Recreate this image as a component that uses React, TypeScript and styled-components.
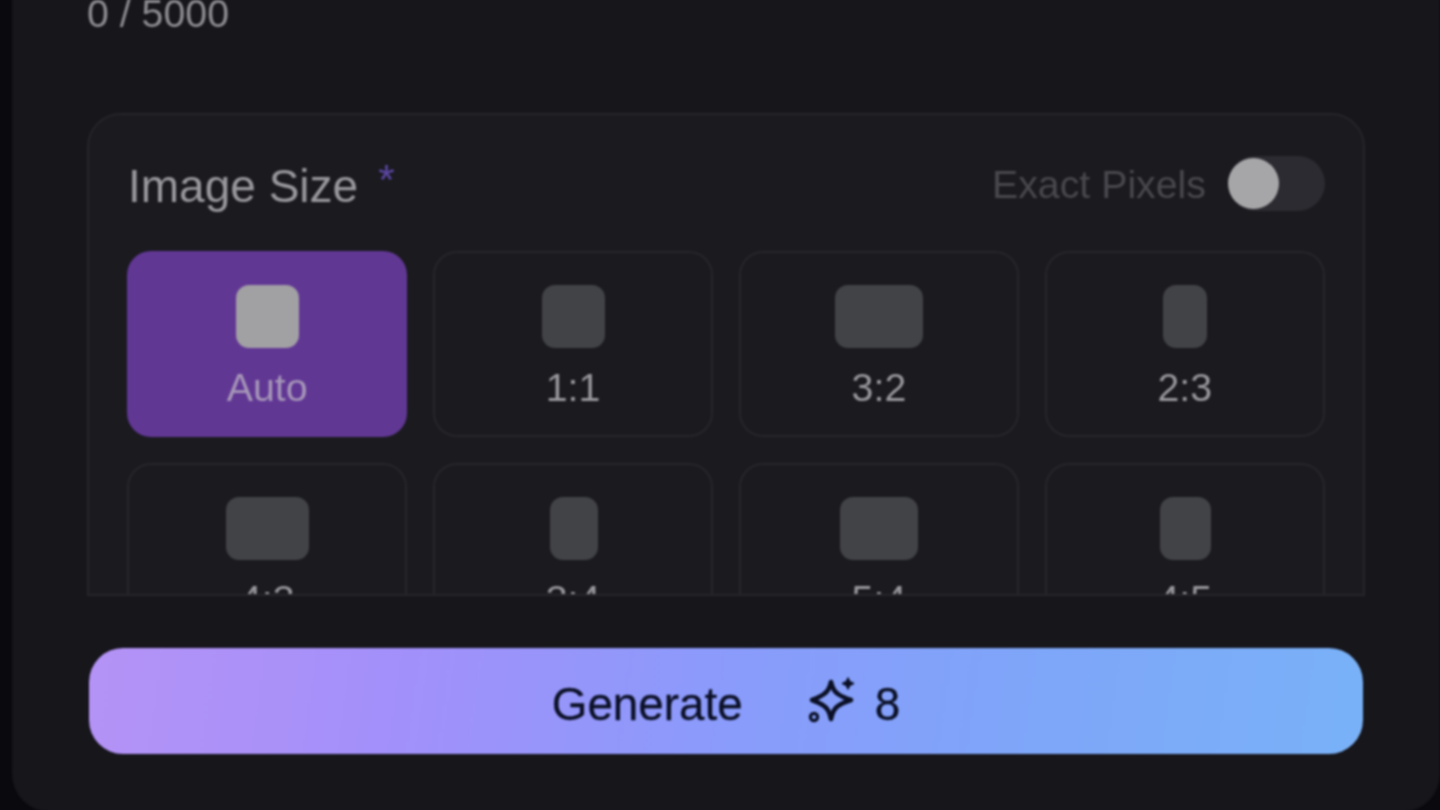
import React from "react";
import styled, { createGlobalStyle } from "styled-components";

const Global = createGlobalStyle`
  html, body { margin: 0; padding: 0; background: #09090e; height: 100%; overflow: hidden; }
  #root { height: 100%; }
`;

const Page = styled.div`
  height: 810px;
  overflow: hidden;
  display: flex;
  flex-direction: column;
  justify-content: flex-end;
  padding-left: 12px;
  background: #09090e;
  font-family: "Liberation Sans", Arial, sans-serif;
`;

const Card = styled.section`
  flex: none;
  box-sizing: border-box;
  background: #16161b;
  border-radius: 0 0 38px 38px;
  margin-bottom: -2px;
  padding: 20px 75px 58px;
  filter: blur(0.8px);
`;

const Counter = styled.div`
  font-size: 39.3px;
  line-height: 56px;
  color: #8d8d91;
  margin-bottom: 72px;
`;

const Panel = styled.div`
  box-sizing: border-box;
  height: 483px;
  overflow: hidden;
  background: #1a1a1f;
  border: 2px solid #25252a;
  border-radius: 34px 34px 0 0;
  padding: 38px 38px 0;
  margin-bottom: 52px;
`;

const PanelHead = styled.header`
  display: flex;
  align-items: center;
  justify-content: space-between;
  height: 60px;
  margin-bottom: 38px;
`;

const Title = styled.div`
  display: flex;
  align-items: flex-start;
  font-size: 46px;
  line-height: 60px;
  color: #98989c;
  padding: 6px 0 0 1px;
`;

const Required = styled.span`
  font-size: 42px;
  line-height: 44px;
  margin-left: 20px;
  margin-top: 2px;
  color: #5c47a3;
`;

const ExactRow = styled.div`
  display: flex;
  align-items: center;
  gap: 22px;
`;

const ExactLabel = styled.span`
  font-size: 39.3px;
  padding-top: 2px;
  color: #48484d;
`;

const Toggle = styled.div`
  position: relative;
  width: 97px;
  height: 55px;
  border-radius: 28px;
  background: #2b2b31;
`;

const Knob = styled.div`
  position: absolute;
  left: 0;
  top: 2px;
  width: 51px;
  height: 51px;
  border-radius: 50%;
  background: #a6a6a8;
`;

const Grid = styled.div`
  display: grid;
  grid-template-columns: repeat(4, 1fr);
  gap: 26px 25.5px;
`;

const Tile = styled.div<{ $active?: boolean }>`
  box-sizing: border-box;
  height: 186px;
  display: flex;
  flex-direction: column;
  align-items: center;
  padding-top: ${(p) => (p.$active ? 33.5 : 31.5)}px;
  border-radius: 24px;
  border: ${(p) => (p.$active ? "none" : "2px solid #26262b")};
  background: ${(p) => (p.$active ? "#613794" : "#1a1a1f")};
`;

const Shape = styled.div<{ $active?: boolean }>`
  height: 63px;
  margin-left: 1px;
  border-radius: 13px;
  background: ${(p) => (p.$active ? "#a1a0a3" : "#424347")};
`;

const TileLabel = styled.span<{ $active?: boolean }>`
  font-size: 39.3px;
  line-height: 46px;
  margin-top: 16px;
  color: ${(p) => (p.$active ? "#a697b8" : "#98989c")};
`;

const GenerateButton = styled.button`
  display: flex;
  align-items: center;
  justify-content: center;
  box-sizing: border-box;
  margin: 0 2px;
  width: 1274px;
  height: 106px;
  padding: 8px 0 0;
  border: none;
  border-radius: 34px;
  background: linear-gradient(98deg, #b593f6 0%, #a390fa 24%, #8a9bfb 50%, #7fa5f9 72%, #79b2f8 100%);
  font-family: inherit;
  font-size: 45.8px;
  color: #0b1026;
  -webkit-text-stroke: 0.3px #0b1026;
`;

const Cost = styled.span`
  display: flex;
  align-items: center;
  gap: 18px;
  margin-left: 62px;
`;

const CostIcon = styled.svg`
  width: 52px;
  height: 52px;
  margin-top: -8px;
  fill: none;
  stroke: currentColor;
  stroke-width: 4.6;
  stroke-linejoin: round;
`;

const tiles: { label: string; width: number; active?: boolean }[] = [
  { label: "Auto", width: 63, active: true },
  { label: "1:1", width: 63 },
  { label: "3:2", width: 88 },
  { label: "2:3", width: 44 },
  { label: "4:3", width: 83 },
  { label: "3:4", width: 48 },
  { label: "5:4", width: 78 },
  { label: "4:5", width: 51 },
];

export default function App() {
  return (
    <Page>
      <Global />
      <Card>
        <Counter>0 / 5000</Counter>
        <Panel>
          <PanelHead>
            <Title>
              Image Size<Required>*</Required>
            </Title>
            <ExactRow>
              <ExactLabel>Exact Pixels</ExactLabel>
              <Toggle>
                <Knob />
              </Toggle>
            </ExactRow>
          </PanelHead>
          <Grid>
            {tiles.map((t) => (
              <Tile key={t.label} $active={t.active}>
                <Shape $active={t.active} style={{ width: t.width }} />
                <TileLabel $active={t.active}>{t.label}</TileLabel>
              </Tile>
            ))}
          </Grid>
        </Panel>
        <GenerateButton>
          Generate
          <Cost>
            <CostIcon viewBox="0 0 52 52">
              <path d="M26 7 Q28 16 33 19 Q37 22 46 25 Q37 28 33 31 Q28 34 26 44 Q24 34 19 31 Q15 28 7 25 Q15 22 19 19 Q24 16 26 7Z" />
              <path d="M43 3 L44.8 6.7 L48.5 8.5 L44.8 10.3 L43 14 L41.2 10.3 L37.5 8.5 L41.2 6.7Z" fill="currentColor" strokeWidth="1.4" />
              <circle cx="9" cy="42" r="3.6" strokeWidth="3.2" />
            </CostIcon>
            8
          </Cost>
        </GenerateButton>
      </Card>
    </Page>
  );
}
